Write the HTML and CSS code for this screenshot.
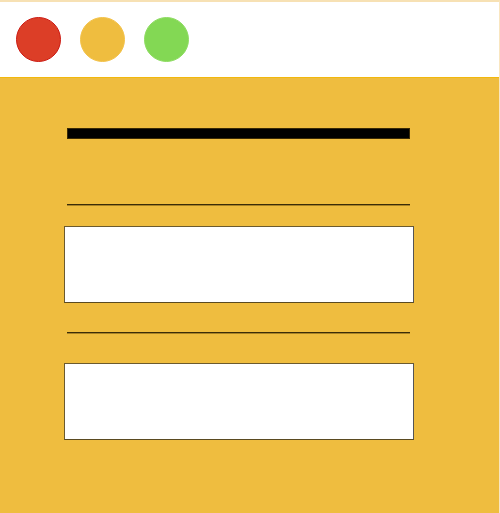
FILE: index.html
```html
<!DOCTYPE html>
<html>
<head>
<meta charset="utf-8">
<link rel="stylesheet" href="styles.css">
</head>
<body>
<div class="window">
  <div class="titlebar">
    <span class="dot red"></span>
    <span class="dot yellow"></span>
    <span class="dot green"></span>
  </div>
  <div class="content">
    <div class="title-bar"></div>
    <div class="label-line first"></div>
    <div class="field"></div>
    <div class="label-line"></div>
    <div class="field"></div>
  </div>
</div>
</body>
</html>
```
FILE: styles.css
```css
html, body {
  margin: 0;
  padding: 0;
  background: #efbd3f;
}
.window {
  width: 499px;
  height: 511px;
  border-top: 2px solid #f7e1b4;
  border-right: 1px solid #f9e6c0;
  background: #efbd3f;
  display: flex;
  flex-direction: column;
}
.titlebar {
  height: 75px;
  background: #ffffff;
  border-bottom: 1px solid #f2b80c;
  display: flex;
  align-items: center;
  padding-left: 16px;
  gap: 19px;
  box-sizing: content-box;
  flex-shrink: 0;
}
.dot {
  width: 45px;
  height: 45px;
  border-radius: 50%;
  box-sizing: border-box;
}
.red { background: #dc3e27; border: 1px solid #cc1a12; }
.yellow { background: #efbd3f; border: 1px solid #f3c24a; }
.green { background: #83d854; border: 1px solid #8fdc63; }
.content {
  padding-left: 64px;
  display: flex;
  flex-direction: column;
}
.title-bar {
  margin: 50px 0 0 3px;
  width: 343px;
  height: 11px;
  background: #000;
  box-sizing: border-box;
  border: 1px solid #3a2a05;
}
.label-line {
  margin: 29px 0 0 3px;
  width: 343px;
  height: 2px;
  box-sizing: border-box;
  border-top: 1px solid #3a2c08;
  border-bottom: 1px solid #a88327;
}
.label-line.first { margin-top: 65px; }
.field {
  margin-top: 20px;
  width: 350px;
  height: 77px;
  box-sizing: border-box;
  background: #fff;
  border: 1px solid #6b5a2e;
  border-right-color: #555;
  border-bottom-color: #5a4a20;
}
.label-line + .field { margin-top: 29px; }
.label-line.first + .field { margin-top: 20px; }
```
